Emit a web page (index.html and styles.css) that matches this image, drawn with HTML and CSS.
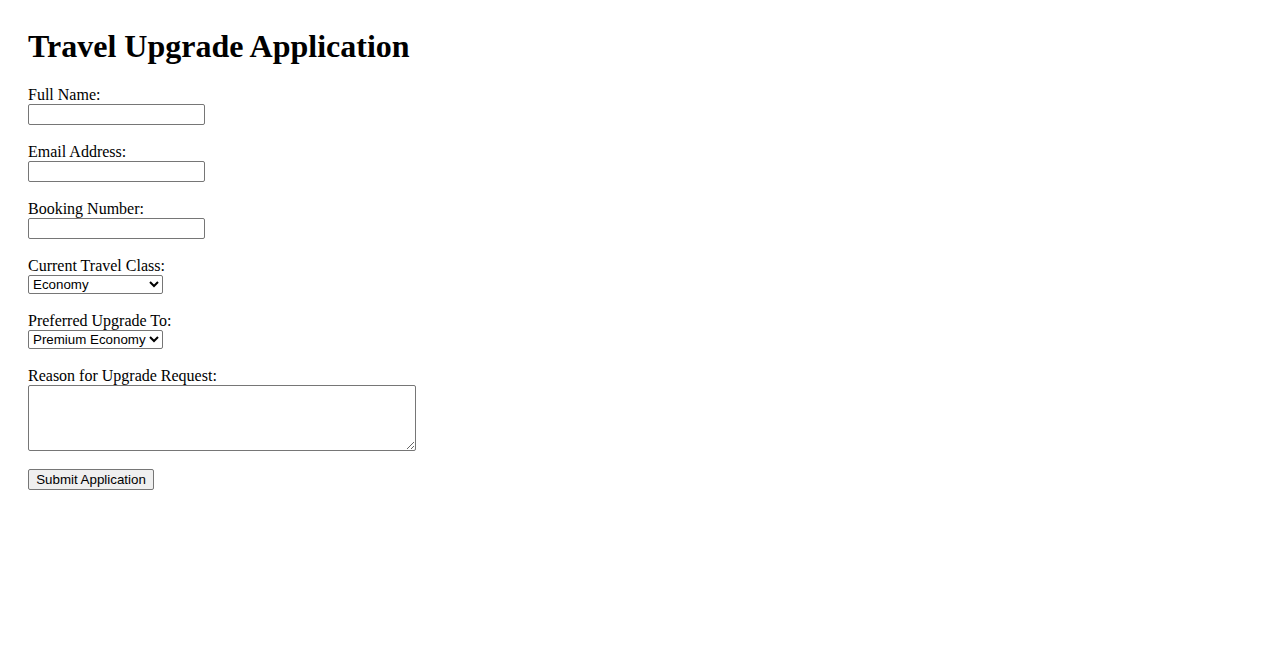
FILE: index.html
```html
<!DOCTYPE html>
<html lang="en">
<head>
<meta charset="utf-8">
<title>Travel Upgrade Application</title>
<link rel="stylesheet" href="styles.css">
</head>
<body>
<div class="page">
  <h1 class="title">Travel Upgrade Application</h1>
  <form class="form">
    <div class="group">
      <label class="label" for="name">Full Name:</label>
      <input class="field" type="text" id="name">
    </div>
    <div class="group">
      <label class="label" for="email">Email Address:</label>
      <input class="field" type="email" id="email">
    </div>
    <div class="group">
      <label class="label" for="booking">Booking Number:</label>
      <input class="field" type="text" id="booking">
    </div>
    <div class="group">
      <label class="label" for="current">Current Travel Class:</label>
      <select class="choice" id="current">
        <option>Economy</option>
        <option>Premium Economy</option>
        <option>Business</option>
        <option>First</option>
      </select>
    </div>
    <div class="group">
      <label class="label" for="preferred">Preferred Upgrade To:</label>
      <select class="choice" id="preferred">
        <option>Premium Economy</option>
        <option>Business</option>
        <option>First</option>
      </select>
    </div>
    <div class="group">
      <label class="label" for="reason">Reason for Upgrade Request:</label>
      <textarea class="area" id="reason"></textarea>
    </div>
    <button class="submit" type="button">Submit Application</button>
  </form>
</div>
</body>
</html>
```

FILE: styles.css
```css
html, body {
  margin: 0;
  padding: 0;
  background: #ffffff;
}

body {
  font-family: "Liberation Serif", "Times New Roman", serif;
  font-size: 16px;
  color: #000000;
}

.page {
  padding: 28px;
}

.title {
  margin: 0 0 21px 0;
  font-size: 32px;
  font-weight: bold;
  line-height: 37px;
}

.form {
  display: flex;
  flex-direction: column;
  align-items: flex-start;
}

.group {
  display: flex;
  flex-direction: column;
  align-items: flex-start;
  margin-bottom: 18px;
}

.label {
  display: block;
  line-height: 18px;
  height: 18px;
}

.field {
  box-sizing: border-box;
  width: 177px;
  height: 21px;
  margin: 0;
  padding: 1px 2px;
  border: 1px solid #767676;
  border-radius: 2px;
  font-family: "Liberation Sans", Arial, sans-serif;
  font-size: 13.333px;
  background: #ffffff;
}

.choice {
  box-sizing: border-box;
  width: 135px;
  height: 19px;
  margin: 0;
  font-family: "Liberation Sans", Arial, sans-serif;
  font-size: 13.333px;
  color: #000000;
  border: 1px solid #767676;
  border-radius: 2px;
  background: #ffffff;
}

.area {
  box-sizing: border-box;
  width: 388px;
  height: 66px;
  margin: 0;
  padding: 2px;
  border: 1px solid #767676;
  border-radius: 2px;
  font-family: "Liberation Mono", monospace;
  font-size: 13.333px;
  resize: both;
}

.submit {
  box-sizing: border-box;
  width: 126px;
  height: 21px;
  margin: 0;
  padding: 1px 6px;
  font-family: "Liberation Sans", Arial, sans-serif;
  font-size: 13.333px;
  color: #000000;
  background: #efefef;
  border: 1px solid #767676;
  border-radius: 2px;
}
```
